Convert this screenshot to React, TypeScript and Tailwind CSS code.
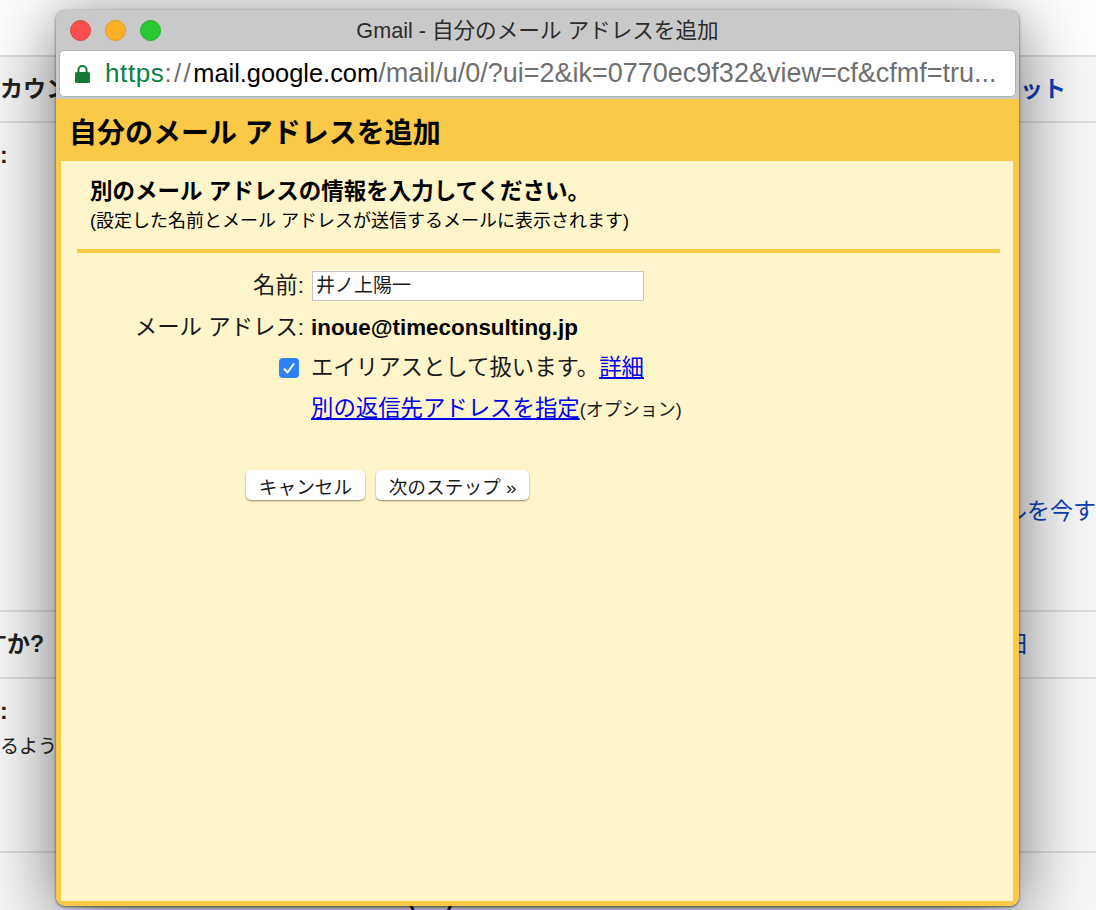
const font = '[font-family:"Liberation_Sans","Noto_Sans_CJK_JP",sans-serif]';

function Backdrop() {
  return (
    <div className="flex h-[910px] flex-col overflow-hidden bg-[#f6f6f6]">
      <div className="h-[57px] shrink-0 border-b-2 border-[#dcdcdc] bg-white" />
      <div className="flex h-[66px] shrink-0 items-center justify-between border-b-2 border-[#dcdcdc] pr-[30px] text-[23px] font-bold">
        <span className="text-[#222]">カウント</span>
        <span className="text-[#0c3fb8]">ット</span>
      </div>
      <div className="flex h-[489px] shrink-0 flex-col border-b-2 border-[#dcdcdc]">
        <span className="mt-[18px] text-[23px] leading-[28px] font-bold text-[#222]">:</span>
        <span className="mt-[327px] self-end whitespace-nowrap text-[23px] leading-[30px] text-[#0c3fb8]">ルを今す</span>
      </div>
      <div className="flex h-[67px] shrink-0 items-center justify-between border-b-2 border-[#dcdcdc] pr-[67px] text-[23px]">
        <div className="flex w-[44px] justify-end overflow-hidden whitespace-nowrap font-bold text-[#222]">
          <span className="shrink-0">ですか?</span>
        </div>
        <span className="text-[#0c3fb8]">日</span>
      </div>
      <div className="flex h-[174px] shrink-0 flex-col border-b-2 border-[#dcdcdc] text-[#222]">
        <span className="mt-[18px] text-[23px] leading-[28px] font-bold">:</span>
        <span className="mt-[9px] text-[19px] leading-[26px] whitespace-nowrap">るように</span>
      </div>
      <div className="flex pt-[31px] pl-[408px] text-[22px] leading-[30px] font-bold text-[#222]">
        <span>(</span>
        <span className="w-[31px]" />
        <span>)</span>
      </div>
    </div>
  );
}

function TrafficLights() {
  return (
    <div className="flex gap-[14px]">
      <div className="h-[21px] w-[21px] rounded-full border border-[#e2443f] bg-[#fc4f4f]" />
      <div className="h-[21px] w-[21px] rounded-full border border-[#e09a1f] bg-[#feb024]" />
      <div className="h-[21px] w-[21px] rounded-full border border-[#22ac2b] bg-[#28c832]" />
    </div>
  );
}

function LockIcon() {
  return (
    <svg width="15" height="18" viewBox="0 0 15 18" className="shrink-0">
      <path d="M3.4 8V5.2a4.1 4.1 0 0 1 8.2 0V8" fill="none" stroke="#157a38" strokeWidth="2" />
      <rect x="0" y="7" width="15" height="11" rx="1.5" fill="#157a38" />
    </svg>
  );
}

function AddressForm() {
  return (
    <div className="flex flex-col text-[#1a1a1a]">
      <div className="flex items-center gap-[8px]">
        <span className="w-[227px] text-right text-[22.4px] leading-[30px]">名前:</span>
        <div className="flex h-[30px] w-[332px] items-center border border-[#c4c4c4] bg-white px-[3px] text-[19px]">
          井ノ上陽一
        </div>
      </div>
      <div className="mt-[12px] flex items-center gap-[7px]">
        <span className="w-[227px] shrink-0 text-right text-[22.4px] leading-[30px] whitespace-nowrap">メール アドレス:</span>
        <span className="text-[22.4px] leading-[30px] font-bold text-black">inoue@timeconsulting.jp</span>
      </div>
      <div className="mt-[10px] flex items-center pl-[202px]">
        <div className="flex h-[20px] w-[20px] items-center justify-center rounded-[4px] bg-[#2f7ff6]">
          <svg width="16" height="16" viewBox="0 0 16 16">
            <path d="M3 8.5 6.5 12.5 13 3.5" fill="none" stroke="#fff" strokeWidth="2" />
          </svg>
        </div>
        <span className="ml-[12px] text-[22.4px] leading-[30px]">エイリアスとして扱います。</span>
        <a className="text-[22.4px] leading-[30px] text-[#0000ee] underline">詳細</a>
      </div>
      <div className="mt-[10px] flex items-center pl-[234px]">
        <a className="text-[22.4px] leading-[30px] text-[#0000ee] underline">別の返信先アドレスを指定</a>
        <span className="pt-[2px] text-[18px] leading-[30px]">(オプション)</span>
      </div>
      <div className="mt-[45px] flex gap-[11px] pl-[169px]">
        <button className="h-[30px] w-[119px] rounded-[5px] bg-white pt-[5px] text-[18.7px] leading-[25px] text-[#1a1a1a] shadow-[0_1px_2px_rgba(0,0,0,0.45)]">
          キャンセル
        </button>
        <button className="h-[30px] w-[153px] rounded-[5px] bg-white pt-[5px] text-[18.7px] leading-[25px] text-[#1a1a1a] shadow-[0_1px_2px_rgba(0,0,0,0.45)]">
          次のステップ »
        </button>
      </div>
    </div>
  );
}

export default function App() {
  return (
    <div className={`relative h-[910px] w-[1096px] overflow-hidden ${font}`}>
      <Backdrop />
      <div className="absolute top-[10px] left-[56px] flex h-[896px] w-[963px] flex-col overflow-hidden rounded-[9px] bg-[#c9c9c9] shadow-[0_1px_3px_rgba(0,0,0,0.6),0_10px_70px_rgba(0,0,0,0.55)]">
        <div className="relative flex h-[40px] shrink-0 items-center pl-[14px]">
          <TrafficLights />
          <div className="absolute inset-x-0 top-0 text-center text-[21.6px] leading-[41px] text-[#2c2c2c]">
            Gmail - 自分のメール アドレスを追加
          </div>
        </div>
        <div className="mx-[3px] flex h-[47px] shrink-0 items-center rounded-[5px] border border-[#b3b3b3] bg-white pl-[15px] whitespace-nowrap">
          <LockIcon />
          <span className="ml-[15px] text-[26px] tracking-[0.6px] text-[#0b8043]">https</span>
          <span className="text-[26px] tracking-[2.4px] text-[#6f6f6f]">://</span>
          <span className="text-[25.4px] text-black">mail.google.com</span>
          <span className="text-[27px] text-[#6f6f6f]">/mail/u/0/?ui=2&amp;ik=0770ec9f32&amp;view=cf&amp;cfmf=tru...</span>
        </div>
        <div className="mt-[2px] flex min-h-0 flex-1 flex-col rounded-b-[9px] bg-[#fac947] pr-[6px] pb-[5px] pl-[5px]">
          <div className="flex h-[62px] shrink-0 items-center pt-[8px] pl-[8px] text-[28px] font-bold text-black">
            自分のメール アドレスを追加
          </div>
          <div className="flex-1 bg-[#fef5ca] pr-[13px] pl-[16px]">
            <div className="border-b-[4px] border-[#fac947] pt-[17px] pb-[13px] pl-[13px] text-black">
              <div className="text-[22.5px] leading-[28px] font-bold">別のメール アドレスの情報を入力してください。</div>
              <div className="text-[18px] leading-[30px]">(設定した名前とメール アドレスが送信するメールに表示されます)</div>
            </div>
            <div className="pt-[18px]">
              <AddressForm />
            </div>
          </div>
        </div>
      </div>
    </div>
  );
}
